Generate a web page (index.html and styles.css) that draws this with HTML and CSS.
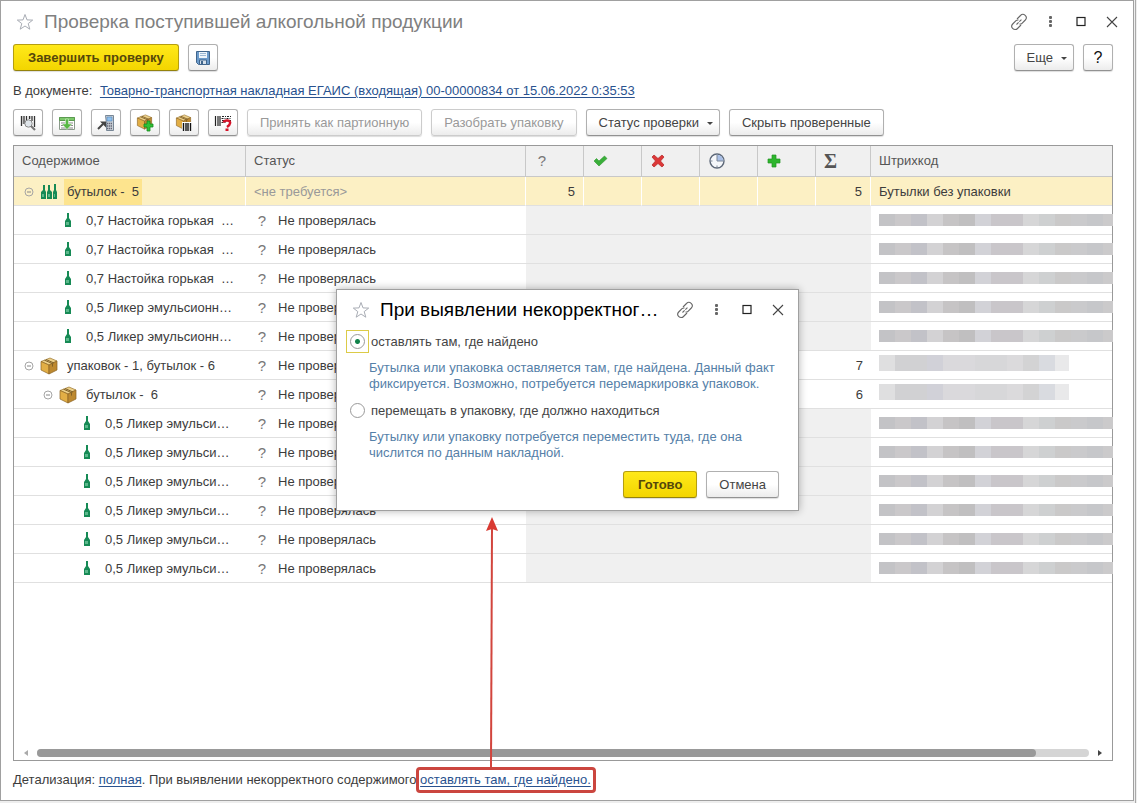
FILE: index.html
```html
<!DOCTYPE html>
<html lang="ru">
<head>
<meta charset="UTF-8" />
<meta name="viewport" content="width=device-width, initial-scale=1" />
<title>Проверка поступившей алкогольной продукции</title>
<link rel="stylesheet" href="styles.css">
</head>
<body>

<!-- Shared icons -->
<svg class="sprite" aria-hidden="true">
  <symbol id="star" viewBox="0 0 18 18"><path d="M9 1.5l2 5.4 5.7.2-4.5 3.5 1.6 5.6L9 13l-4.8 3.2 1.6-5.6L1.3 7.1 7 6.9z" fill="#fff" stroke="#a9adb5"/></symbol>
  <symbol id="link" viewBox="0 0 18 18"><g fill="none" stroke="#666" stroke-width="1.1"><path d="M7 6l3.500-3.500a3.200 3.200 0 0 1 4.800 4.500L12 10.300q-1 1-2.500.7"/><path d="M11 12l-3.500 3.500A3.200 3.200 0 0 1 2.700 11L6 7.700q1-1 2.500-.7"/><path d="M6.500 11.500l5-5" stroke-dasharray="3 1"/></g></symbol>
  <symbol id="dots" viewBox="0 0 18 18"><g fill="#666"><rect x="8" y="3" width="3" height="3" rx="1"/><rect x="8" y="7" width="3" height="3" rx="1"/><rect x="8" y="11" width="3" height="3" rx="1"/></g></symbol>
  <symbol id="square" viewBox="0 0 18 18"><rect x="5" y="4.500" width="8" height="8" fill="none" stroke="#222" stroke-width="1.200"/></symbol>
  <symbol id="close" viewBox="0 0 18 18"><path d="M4 4l10 10M14 4L4 14" stroke="#444" stroke-width="1.100"/></symbol>
  <symbol id="save" viewBox="0 0 18 18"><path d="M2.500 2.500h13v13h-11l-2-2z" fill="#6c9bcb" stroke="#40658c"/><path d="M5 3h8v6H5z" fill="#eef5fb"/><path d="M6 4.500h6M6 6.500h6" stroke="#9cb8d4"/><path d="M5.500 11h7v4.500h-7z" fill="#d5e0ea" stroke="#40658c"/><path d="M7 12h2v3H7z" fill="#40658c"/></symbol>
  <symbol id="scan" viewBox="0 0 18 18"><path d="M2.500 2v10M5 2v8M7.500 2v5M10.500 2v3M13 2v5M15.500 2v11" stroke="#333" stroke-width="1.300"/><path d="M4 2v8M12 2v3" stroke="#777" stroke-width=".6"/><circle cx="9.500" cy="9.500" r="3.700" fill="#dfe5ea" stroke="#888"/><path d="M12 12l4 4" stroke="#777" stroke-width="2.200"/></symbol>
  <symbol id="fill" viewBox="0 0 18 18"><path d="M1.500 3.500h15v12h-15z" fill="#fff" stroke="#8a9a8a"/><path d="M1.500 3.500h15v3h-15z" fill="#7cc86a" stroke="#5b9b50"/><path d="M3 9h12M3 11.500h12M3 14h12" stroke="#888"/><path d="M7.500 5h3v5h3.500l-5 5.500L4 10h3.500z" fill="#58b845" stroke="#d9f2d2" stroke-width=".6"/></symbol>
  <symbol id="terminal" viewBox="0 0 18 18"><path d="M8.500 1.500h8v15h-7v-7z" fill="#c9d0d6" stroke="#788796"/><path d="M10 3h5v4h-5z" fill="#8fc1ee" stroke="#5485b5" stroke-width=".6"/><path d="M10 9.500h5M10 12h5M10 14.500h5" stroke="#667" stroke-width="1.300" stroke-dasharray="1.300 .6"/><path d="M1 15l5-5" stroke="#444" stroke-width="2"/><path d="M3 7.500h6v6z" fill="#444"/></symbol>
  <symbol id="box" viewBox="0 0 18 18"><path d="M1 4.500L10 1l7 3-8 4z" fill="#ecd08a" stroke="#9a722b" stroke-width=".7"/><path d="M1 4.500L9 8v9l-8-4z" fill="#e2ae45" stroke="#8b6323" stroke-width=".7"/><path d="M9 8l8-4v9l-8 4z" fill="#bd8930" stroke="#8b6323" stroke-width=".7"/><path d="M4.500 3.200l8 3.400v3M6 2.500l8 3.500" stroke="#806027" fill="none"/></symbol>
  <symbol id="plus" viewBox="0 0 18 18"><path d="M6 3h4v4h4v4h-4v4H6v-4H2V7h4z" fill="#2db52d" stroke="#1f9320" stroke-width=".7"/></symbol>
  <symbol id="box-plus" viewBox="0 0 18 18"><use href="#box" width="17" height="16"/><path d="M11 7h3v3h3v3h-3v4h-3v-4H8v-3h3z" fill="#2fc236" stroke="#168a1d" stroke-width=".8"/></symbol>
  <symbol id="box-code" viewBox="0 0 18 18"><use href="#box" width="17" height="16"/><path d="M7 8h10v9H7z" fill="#fff"/><path d="M8.500 9v8M11 9v8M13 9v8M15.500 9v8" stroke="#111" stroke-width="1.400"/></symbol>
  <symbol id="code-ask" viewBox="0 0 18 18"><path d="M1.500 2v10M4 2v10M6 2v10" stroke="#222" stroke-width="1.200"/><path d="M8 2.500h9M7.500 4.500h9M8 6.500h9M7.500 8.500h4" stroke="#222" stroke-dasharray="2 1 1 1"/><path d="M9.500 8.500Q10 6.500 13 6.500t3.200 2.300Q16 10.800 13 13" fill="none" stroke="#d51329" stroke-width="2.400"/><path d="M11.500 14.500h3V17h-3z" fill="#d51329"/></symbol>
  <symbol id="bottle" viewBox="0 0 18 18"><path d="M8 1h2v5l2 3v6H6V9l2-3z" fill="#168a55"/><path d="M7 10h3v3H7z" fill="#5cb88c"/></symbol>
  <symbol id="bottles" viewBox="0 0 18 18"><path d="M3 2h2v5l1 2v7H1V9l2-2zM8 2h2v5l2 2v7H7V9l1-2zM14 1h2v6l1 2v7h-4V9l1-2z" fill="#168a55"/><path d="M2 11h2v3H2zM8 11h2v3H8zM14 11h1v3h-1z" fill="#5cb88c"/></symbol>
  <symbol id="minus" viewBox="0 0 10 10"><circle cx="5" cy="5" r="4" fill="none" stroke="#a5a5a5"/><path d="M3 5h4" stroke="#888"/></symbol>
  <symbol id="check" viewBox="0 0 18 18"><path d="M2 9l2.500-2.500L7 9l5.500-5L15 6.500 7 14z" fill="#3aaf3a" stroke="#2c962c" stroke-width=".6"/></symbol>
  <symbol id="cross" viewBox="0 0 18 18"><path d="M2 5l2-2 4 3.500L12 3l2 2-3.500 4 3.500 4-2 2-4-3.500L4 15l-2-2 3.500-4z" fill="#dc3838" stroke="#b62222" stroke-width=".7"/></symbol>
  <symbol id="clock" viewBox="0 0 18 18"><circle cx="9" cy="9" r="7" fill="#f5f7fa" stroke="#5d6878" stroke-width="1.400"/><path d="M9 9V2.700A6.300 6.300 0 0 1 15.300 9z" fill="#a9bfe6"/><path d="M9 2v7h6.500M3 9h1.500M9 15v-1.500" stroke="#7c8796" fill="none"/></symbol>
</svg>

<div class="desk">
<main class="window">
  <header class="titlebar">
    <svg class="icon"><use href="#star"/></svg>
    <h1>Проверка поступившей алкогольной продукции</h1>
    <button class="tool" aria-label="Ссылка"><svg class="icon"><use href="#link"/></svg></button>
    <button class="tool" aria-label="Меню"><svg class="icon"><use href="#dots"/></svg></button>
    <button class="tool" aria-label="Развернуть"><svg class="icon"><use href="#square"/></svg></button>
    <button class="tool" aria-label="Закрыть"><svg class="icon"><use href="#close"/></svg></button>
  </header>

  <div class="bar">
    <button class="btn primary">Завершить проверку</button>
    <button class="btn square" aria-label="Записать"><svg class="icon"><use href="#save"/></svg></button>
    <span class="spacer"></span>
    <button class="btn menu">Еще</button>
    <button class="btn square help" aria-label="Справка">?</button>
  </div>

  <p class="document">В документе: <a href="#">Товарно-транспортная накладная ЕГАИС (входящая) 00-00000834 от 15.06.2022 0:35:53</a></p>

  <div class="bar">
    <button class="btn square" aria-label="Поиск по штрихкоду"><svg class="icon"><use href="#scan"/></svg></button>
    <button class="btn square" aria-label="Загрузить"><svg class="icon"><use href="#fill"/></svg></button>
    <button class="btn square" aria-label="Терминал"><svg class="icon"><use href="#terminal"/></svg></button>
    <button class="btn square" aria-label="Добавить упаковку"><svg class="icon"><use href="#box-plus"/></svg></button>
    <button class="btn square" aria-label="Штрихкод упаковки"><svg class="icon"><use href="#box-code"/></svg></button>
    <button class="btn square" aria-label="Неизвестный штрихкод"><svg class="icon"><use href="#code-ask"/></svg></button>
    <button class="btn" disabled>Принять как партионную</button>
    <button class="btn" disabled>Разобрать упаковку</button>
    <button class="btn menu">Статус проверки</button>
    <button class="btn">Скрыть проверенные</button>
  </div>

  <section class="frame">
    <table>
      <colgroup>
        <col class="c-name"><col class="c-status">
        <col class="c-num"><col class="c-num"><col class="c-num"><col class="c-num"><col class="c-num">
        <col class="c-sum"><col>
      </colgroup>
      <thead>
        <tr>
          <th>Содержимое</th>
          <th>Статус</th>
          <th><span class="ask">?</span></th>
          <th><svg class="icon"><use href="#check"/></svg></th>
          <th><svg class="icon"><use href="#cross"/></svg></th>
          <th><svg class="icon"><use href="#clock"/></svg></th>
          <th><svg class="icon"><use href="#plus"/></svg></th>
          <th><span class="sigma">Σ</span></th>
          <th>Штрихкод</th>
        </tr>
      </thead>
      <tbody id="items"></tbody>
    </table>
    <div class="scroll">
      <span class="arrow left"></span>
      <div class="track"><div class="thumb"></div></div>
      <span class="arrow right"></span>
    </div>
  </section>

  <footer>
    Детализация: <a href="#">полная</a>. При выявлении некорректного содержимого
    <span class="marked"><a href="#">оставлять там, где найдено.</a><svg class="pointer" viewBox="0 0 14 250"><path d="M6 250L7 10" stroke="#d2453d" stroke-width="2"/><path d="M7 0l6 14-6-2-6 2z" fill="#d93a32"/></svg></span>
  </footer>

  <form class="dialog" role="dialog" aria-labelledby="dialog-title">
    <div class="titlebar">
      <svg class="icon"><use href="#star"/></svg>
      <h2 id="dialog-title">При выявлении некорректног…</h2>
      <button type="button" class="tool" aria-label="Ссылка"><svg class="icon"><use href="#link"/></svg></button>
      <button type="button" class="tool" aria-label="Меню"><svg class="icon"><use href="#dots"/></svg></button>
      <button type="button" class="tool" aria-label="Развернуть"><svg class="icon"><use href="#square"/></svg></button>
      <button type="button" class="tool" aria-label="Закрыть"><svg class="icon"><use href="#close"/></svg></button>
    </div>
    <label><span class="radio"><input type="radio" name="mode" checked></span>оставлять там, где найдено</label>
    <p>Бутылка или упаковка оставляется там, где найдена. Данный факт<br>фиксируется. Возможно, потребуется перемаркировка упаковок.</p>
    <label><span class="radio"><input type="radio" name="mode"></span>перемещать в упаковку, где должно находиться</label>
    <p>Бутылку или упаковку потребуется переместить туда, где она<br>числится по данным накладной.</p>
    <div class="actions">
      <button type="button" class="btn primary">Готово</button>
      <button type="button" class="btn">Отмена</button>
    </div>
  </form>
</main>
</div>

<script>
const items = [
  { level: 0, icon: 'bottles', name: 'бутылок -\u00a0 5', group: true, selected: true, left: 5, sum: 5, code: 'Бутылки без упаковки' },
  { level: 1, icon: 'bottle', name: '0,7 Настойка горькая\u00a0 …' },
  { level: 1, icon: 'bottle', name: '0,7 Настойка горькая\u00a0 …' },
  { level: 1, icon: 'bottle', name: '0,7 Настойка горькая\u00a0 …' },
  { level: 1, icon: 'bottle', name: '0,5 Ликер эмульсионн…' },
  { level: 1, icon: 'bottle', name: '0,5 Ликер эмульсионн…' },
  { level: 0, icon: 'box', name: 'упаковок - 1, бутылок - 6', group: true, sum: 7 },
  { level: 1, icon: 'box', name: 'бутылок -\u00a0 6', group: true, sum: 6 },
  { level: 2, icon: 'bottle', name: '0,5 Ликер эмульси…' },
  { level: 2, icon: 'bottle', name: '0,5 Ликер эмульси…' },
  { level: 2, icon: 'bottle', name: '0,5 Ликер эмульси…' },
  { level: 2, icon: 'bottle', name: '0,5 Ликер эмульси…' },
  { level: 2, icon: 'bottle', name: '0,5 Ликер эмульси…' },
  { level: 2, icon: 'bottle', name: '0,5 Ликер эмульси…' }
];

function renderItems() {
  const tbody = document.getElementById('items');
  tbody.innerHTML = items.map(item => {
    const rowClass = item.selected ? 'selected' : item.group ? 'group' : 'leaf';
    const status = item.selected
      ? '<span class="muted">&lt;не требуется&gt;</span>'
      : '<div class="status"><span class="ask">?</span>Не проверялась</div>';
    return `<tr class="${rowClass}">
      <td><div class="node level-${item.level}">
        <span class="toggle">${item.group ? '<svg><use href="#minus"/></svg>' : ''}</span>
        <svg class="icon"><use href="#${item.icon}"/></svg>
        <span class="name">${item.name}</span>
      </div></td>
      <td>${status}</td>
      <td class="num">${item.left || ''}</td>
      <td class="num"></td><td class="num"></td><td class="num"></td><td class="num"></td>
      <td class="num">${item.sum || ''}</td>
      <td class="code">${item.code || '<div class="hidden-code"></div>'}</td>
    </tr>`;
  }).join('');
}

renderItems();
</script>
</body>
</html>
```
FILE: styles.css
```css
* { box-sizing: border-box; }
body { margin: 0; background: #eee; color: #3c3c3c; font: 13px/16px "Liberation Sans", Arial, sans-serif; }
button, input { font: inherit; margin: 0; }
a { color: #29528f; text-underline-offset: 2px; }
svg { display: block; }

.sprite { position: absolute; width: 0; height: 0; }
.icon { width: 18px; height: 18px; flex: none; }

.desk { min-height: 100vh; display: flex; margin-right: 1px; padding: 0 1px 2px 0; border-right: 1px solid #aaa; }
.window { position: relative; flex: 1; display: flex; flex-direction: column; background: #fff; border: 1px solid #a0a0a0; }

/* title bars */
.titlebar { display: flex; align-items: center; height: 43px; padding: 0 5px 2px 15px; }
.titlebar h1, .titlebar h2 { flex: 1; margin: 0 0 0 10px; font-size: 19px; line-height: 22px; font-weight: normal; white-space: nowrap; }
.titlebar h1 { color: #808080; }
.titlebar h2 { color: #000; }
.tool { width: 31px; height: 26px; padding: 0 6px; border: 0; background: none; }

/* command bars */
.bar { display: flex; gap: 9px; padding: 0 20px 0 12px; }
.spacer { flex: 1; }
.btn { height: 27px; padding: 0 12px; border: 1px solid #b0b0b0; border-bottom-color: #929292; border-radius: 3px; background: linear-gradient(#fff 50%, #ececec); color: #444; white-space: nowrap; box-shadow: 0 1px 1px #ddd; }
.btn:disabled { color: #999; border-color: #ccc; }
.primary { padding: 0 14px; background: linear-gradient(#ffe91a, #f3d500); border-color: #b59e10; border-bottom-color: #94820c; color: #55470a; font-weight: bold; }
.square { width: 30px; padding: 0 5px; }
.help { color: #111; font-size: 16px; }
.menu { padding-right: 6px; }
.menu::after { content: ""; display: inline-block; margin-left: 8px; vertical-align: 2px; border: 3px solid transparent; border-top-color: #444; border-bottom: 0; }

.document { margin: 0; padding: 12px 12px 10px; }
.document a { margin-left: 4px; }

/* contents table */
.frame { flex: 1; display: flex; flex-direction: column; margin: 9px 20px 0 12px; border: 1px solid #999; }
table { width: 100%; table-layout: fixed; border-collapse: separate; border-spacing: 0; }
.c-name { width: 232px; }
.c-status { width: 280px; }
.c-num { width: 58px; }
.c-sum { width: 55px; }
th, td { padding: 0 8px; text-align: left; font-weight: normal; white-space: nowrap; border-bottom: 1px solid #e0e0e0; }
th { height: 31px; background: #f0f0f0; color: #555; border-right: 1px solid #c8c8c8; border-bottom-color: #c8c8c8; }
th:last-child { border-right: 0; }
td { height: 29px; padding-top: 2px; }
.num { text-align: right; }
.leaf .num { background: #f0f0f0; }
.leaf .code, .group .code { padding-top: 0; }
.group .code { padding-bottom: 4px; }
.selected td { background: #fcf0c4; border-right: 1px solid #fff; }
.selected td:last-child { border-right: 0; }
.selected .name { background: #fde48e; }
.ask { width: 16px; text-align: center; color: #777; font-size: 15px; }
th .ask { display: block; }
.sigma { color: #555; font: bold 20px/20px "Liberation Serif", serif; }
.muted { color: #999; }
.status { display: flex; gap: 8px; }

.node { display: flex; align-items: center; }
.level-1 { padding-left: 19px; }
.level-2 { padding-left: 38px; }
.toggle { width: 14px; margin-right: 4px; padding: 0 2px; }
.toggle svg { width: 10px; height: 10px; }
.name { margin-left: 6px; padding: 0 3px; line-height: 26px; }

.hidden-code { width: 234px; height: 12px; background: linear-gradient(90deg, #c3c3c6 16px, #cac8ca 16px 32px, #c2c2c8 32px 48px, #d3d2d4 48px 64px, #c6c4c5 64px 80px, #c0bfc0 80px 96px, #d2d2d7 96px 112px, #c9c6ca 112px 144px, #d6d6d7 144px 160px, #ced0d1 160px 176px, #cac9c9 176px 192px, #cacacc 192px 208px, #c6c7ca 208px 224px, #cbcacb 224px); }
.group .hidden-code { width: 190px; height: 16px; background: linear-gradient(90deg, #dfdfe0 16px, #d1d1d3 16px 48px, #d1d1d8 48px 64px, #dad9dc 64px 96px, #d7d7d9 96px 128px, #dbdadc 128px 144px, #d3d3d4 144px 160px, #d9dbe0 160px 176px, #e9e9ea 176px); }

/* scrollbar */
.scroll { display: flex; align-items: center; gap: 9px; margin-top: auto; padding: 3px 7px; }
.track { flex: 1; height: 8px; border-radius: 4px; background: #d5d5d5; }
.thumb { width: 95%; height: 8px; border-radius: 4px; background: #999; }
.arrow { border: 3px solid transparent; }
.left { border-right: 4px solid #aaa; }
.right { border-left: 4px solid #444; }

footer { padding: 11px 12px 12px; }
.marked { position: relative; }
.marked::before { content: ""; position: absolute; inset: -5px -5px -6px -4px; border: 3px solid #cb463f; border-radius: 4px; pointer-events: none; }
.pointer { position: absolute; left: 65px; bottom: 20px; width: 14px; height: 250px; pointer-events: none; }

/* dialog */
.dialog { position: absolute; left: 335px; top: 288px; width: 463px; background: #fff; border: 1px solid #a0a0a0; box-shadow: 0 0 8px rgba(0, 0, 0, .3); }
.dialog .titlebar { height: 40px; padding: 0 4px 0 15px; }
.dialog label { display: flex; align-items: center; gap: 2px; margin-left: 9px; color: #444; }
.dialog p { margin: 7px 12px 7px 32px; color: #5580a8; }
.radio { padding: 3px; border: 1px solid transparent; }
.radio:has(:checked) { border-color: #dccb48; }
.radio input { display: block; appearance: none; width: 15px; height: 15px; border: 1px solid #999; border-radius: 50%; background: #fff; }
.radio input:checked { background: radial-gradient(circle, #12834b 2px, #fff 3px); }
.actions { display: flex; justify-content: flex-end; gap: 9px; padding: 3px 19px 12px; }
```
